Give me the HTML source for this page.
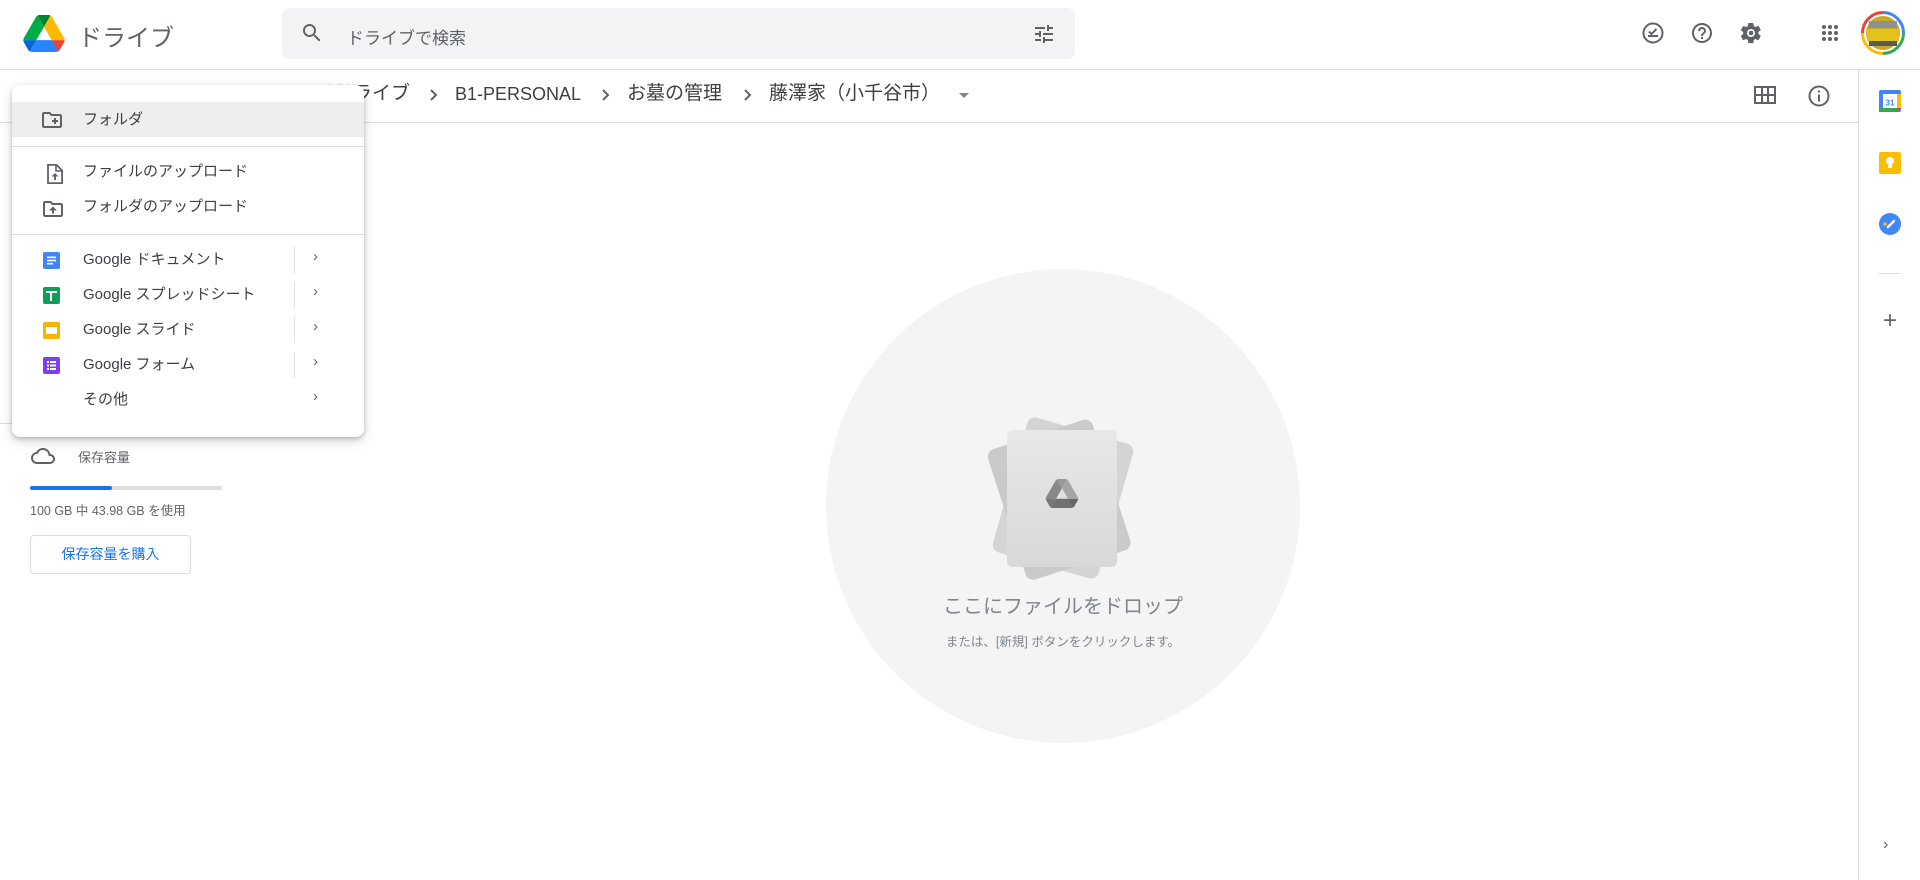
<!DOCTYPE html>
<html><head><meta charset="utf-8"><style>
*{box-sizing:border-box;margin:0;padding:0}
body{width:1920px;height:880px;background:#fff;font-family:"Liberation Sans","Noto Sans CJK JP",sans-serif;position:relative;overflow:hidden;color:#3c4043}
.a{position:absolute}
.mi{position:absolute;left:83px;font-size:15px;color:#3c4043;line-height:20px}
.ic{position:absolute}
.chev{position:absolute;left:301px;font-size:15px;color:#5f6368}
.vs{position:absolute;left:282px;width:1px;height:26px;background:#e0e0e0}
.bc{position:absolute;top:81px;font-size:19px;color:#3c4043;white-space:nowrap;line-height:26px}
</style></head><body>
<svg class="a" style="left:23px;top:15px" width="42" height="37" viewBox="0 0 87.3 78"><path d="m6.6 66.85 3.850 6.65c.8 1.4 1.95 2.5 3.3 3.3l13.75-23.8h-27.5c0 1.55.4 3.1 1.2 4.5z" fill="#0066da"/><path d="m43.65 25-13.75-23.8c-1.35.8-2.5 1.9-3.3 3.3l-25.4 44a9.06 9.06 0 0 0 -1.2 4.5h27.5z" fill="#00ac47"/><path d="m73.55 76.8c1.35-.8 2.5-1.9 3.3-3.3l1.6-2.75 7.65-13.25c.8-1.4 1.2-2.95 1.2-4.5h-27.502l5.852 11.5z" fill="#ea4335"/><path d="m43.65 25 13.75-23.8c-1.35-.8-2.9-1.2-4.5-1.2h-18.5c-1.6 0-3.15.45-4.5 1.2z" fill="#00832d"/><path d="m59.8 53h-32.3l-13.75 23.8c1.35.8 2.9 1.2 4.5 1.2h50.8c1.6 0 3.15-.45 4.5-1.2z" fill="#2684fc"/><path d="m73.4 26.5-12.7-22c-.8-1.4-1.95-2.5-3.3-3.3l-13.75 23.8 16.150 28h27.45c0-1.55-.4-3.1-1.2-4.5z" fill="#ffba00"/></svg>
<div class="a" style="left:78px;top:18px;font-size:24px;color:#5f6368">ドライブ</div>
<div class="a" style="left:282px;top:8px;width:793px;height:51px;background:#f1f3f4;border-radius:8px"></div>
<svg class="a" style="left:300px;top:21px" width="24" height="24" viewBox="0 0 24 24"><path fill="#5f6368" d="M15.5 14h-.79l-.28-.27A6.470 6.470 0 0 0 16 9.5 6.5 6.5 0 1 0 9.5 16c1.61 0 3.09-.59 4.23-1.57l.27.28v.79l5 4.99L20.49 19l-4.99-5zm-6 0C7.01 14 5 11.99 5 9.5S7.01 5 9.5 5 14 7.01 14 9.5 11.990 14 9.5 14z"/></svg>
<div class="a" style="left:347px;top:24px;font-size:17px;color:#5f6368">ドライブで検索</div>
<svg class="a" style="left:1032px;top:22px" width="24" height="24" viewBox="0 0 24 24"><path fill="#5f6368" d="M3 17v2h6v-2H3zM3 5v2h10V5H3zm10 16v-2h8v-2h-8v-2h-2v6h2zM7 9v2H3v2h4v2h2V9H7zm14 4v-2H11v2h10zm-6-4h2V7h4V5h-4V3h-2v6z"/></svg>
<svg class="a" style="left:1641px;top:21px" width="24" height="24" viewBox="0 0 24 24"><circle cx="12" cy="12" r="9.5" fill="none" stroke="#5f6368" stroke-width="2"/><path d="M7 15h10M8 10.5l2.5 2.5 5-5" fill="none" stroke="#5f6368" stroke-width="2"/></svg>
<svg class="a" style="left:1690px;top:21px" width="24" height="24" viewBox="0 0 24 24"><path fill="#5f6368" d="M11 18h2v-2h-2v2zm1-16C6.48 2 2 6.48 2 12s4.48 10 10 10 10-4.48 10-10S17.52 2 12 2zm0 18c-4.41 0-8-3.59-8-8s3.59-8 8-8 8 3.59 8 8-3.59 8-8 8zm0-14c-2.21 0-4 1.79-4 4h2c0-1.1.9-2 2-2s2 .9 2 2c0 2-3 1.75-3 5h2c0-2.25 3-2.5 3-5 0-2.21-1.79-4-4-4z"/></svg>
<svg class="a" style="left:1739px;top:21px" width="24" height="24" viewBox="0 0 24 24"><path fill="#5f6368" d="M19.4 13c.04-.32.06-.66.06-1s-.02-.68-.07-1l2.16-1.68c.19-.15.24-.42.12-.64l-2.05-3.54c-.12-.22-.39-.3-.61-.22l-2.55 1.02c-.53-.4-1.1-.74-1.72-.99L14.36 2.2A.5.5 0 0 0 13.86 2h-4.1c-.25 0-.46.18-.49.42l-.39 2.71c-.62.25-1.19.59-1.72.99L4.6 5.1c-.23-.09-.49 0-.61.22L1.94 8.86c-.13.22-.07.49.12.64L4.22 11c-.05.32-.08.66-.08 1s.02.68.07 1l-2.16 1.68c-.19.15-.24.42-.12.64l2.05 3.54c.12.22.39.3.61.22l2.550-1.02c.53.4 1.1.74 1.72.99l.39 2.71c.04.24.25.42.49.42h4.1c.25 0 .46-.18.49-.42l.39-2.71c.62-.25 1.19-.59 1.72-.99l2.55 1.02c.23.09.49 0 .61-.22l2.05-3.54c.12-.22.07-.49-.12-.64L19.4 13zM12 16c-2.2 0-4-1.8-4-4s1.8-4 4-4 4 1.8 4 4-1.8 4-4 4z"/><circle cx="12" cy="12" r="2.3" fill="#5f6368"/></svg>
<svg class="a" style="left:1818px;top:21px" width="24" height="24" viewBox="0 0 24 24" fill="#5f6368"><circle cx="6" cy="6" r="2"/><circle cx="12" cy="6" r="2"/><circle cx="18" cy="6" r="2"/><circle cx="6" cy="12" r="2"/><circle cx="12" cy="12" r="2"/><circle cx="18" cy="12" r="2"/><circle cx="6" cy="18" r="2"/><circle cx="12" cy="18" r="2"/><circle cx="18" cy="18" r="2"/></svg>
<svg class="a" style="left:1861px;top:11px" width="44" height="44" viewBox="0 0 44 44"><path d="M22 1.5A20.5 20.5 0 0 1 42.5 22" stroke="#4285f4" stroke-width="3" fill="none"/><path d="M42.5 22A20.5 20.5 0 0 1 22 42.5" stroke="#34a853" stroke-width="3" fill="none"/><path d="M22 42.5A20.5 20.5 0 0 1 1.5 22" stroke="#fbbc04" stroke-width="3" fill="none"/><path d="M1.5 22A20.5 20.5 0 0 1 22 1.5" stroke="#ea4335" stroke-width="3" fill="none"/><circle cx="22" cy="22" r="17" fill="#c9a826"/><rect x="6" y="18" width="32" height="12" fill="#e2c21b"/><rect x="8" y="10" width="28" height="7" fill="#8a9096"/><rect x="8" y="30" width="28" height="5" fill="#5a5a50"/></svg>
<div class="a" style="left:0;top:69px;width:1920px;height:1px;background:#dadce0"></div>
<div class="a" style="left:1858px;top:70px;width:1px;height:810px;background:#dadce0"></div>
<svg class="a" style="left:1879px;top:90px" width="22" height="22" viewBox="0 0 22 22"><rect x="0" y="0" width="22" height="22" rx="2" fill="#4285f4"/><rect x="4" y="4" width="14" height="14" fill="#fff"/><rect x="0" y="18" width="18" height="4" fill="#34a853"/><rect x="18" y="4" width="4" height="14" fill="#fbbc04"/><path d="M18 18h4l-4 4z" fill="#ea4335"/><text x="11" y="15.5" font-size="8" text-anchor="middle" fill="#4285f4" font-family="Liberation Sans" font-weight="bold">31</text></svg>
<svg class="a" style="left:1879px;top:152px" width="22" height="22" viewBox="0 0 22 22"><rect width="22" height="22" rx="2" fill="#fbbc04"/><circle cx="11" cy="9" r="4" fill="#fff"/><rect x="9" y="13" width="4" height="3" fill="#fff"/></svg>
<svg class="a" style="left:1879px;top:213px" width="22" height="22" viewBox="0 0 22 22"><circle cx="11" cy="11" r="11" fill="#4285f4"/><path d="M9 14l6-6" stroke="#fff" stroke-width="2.5" stroke-linecap="round"/><circle cx="6" cy="11" r="1.8" fill="#fbbc04"/></svg>
<div class="a" style="left:1879px;top:273px;width:22px;height:1px;background:#dadce0"></div>
<div class="a" style="left:1879px;top:307px;font-size:24px;color:#5f6368;width:22px;text-align:center">+</div>
<div class="a" style="left:1883px;top:836px;font-size:16px;color:#5f6368">›</div>
<div class="a" style="left:0;top:122px;width:1858px;height:1px;background:#dadce0"></div>
<div class="bc" style="left:296px">マイドライブ</div>
<svg class="a" style="left:428px;top:88px" width="12" height="14"><path d="M3 2l5 5-5 5" fill="none" stroke="#5f6368" stroke-width="2"/></svg>
<div class="bc" style="left:455px;font-size:18px">B1-PERSONAL</div>
<svg class="a" style="left:600px;top:88px" width="12" height="14"><path d="M3 2l5 5-5 5" fill="none" stroke="#5f6368" stroke-width="2"/></svg>
<div class="bc" style="left:627px">お墓の管理</div>
<svg class="a" style="left:742px;top:88px" width="12" height="14"><path d="M3 2l5 5-5 5" fill="none" stroke="#5f6368" stroke-width="2"/></svg>
<div class="bc" style="left:769px">藤澤家（小千谷市）</div>
<svg class="a" style="left:958px;top:92px" width="12" height="8"><path d="M1 1h10L6 6z" fill="#80868b"/></svg>
<svg class="a" style="left:1754px;top:86px" width="22" height="18" viewBox="0 0 22 18"><path d="M0 0h22v18H0z" fill="#5f6368"/><path d="M2 2h5v6H2zM9 2h4v6H9zM15 2h5v6h-5zM2 10h5v6H2zM9 10h4v6H9zM15 10h5v6h-5z" fill="#fff"/></svg>
<svg class="a" style="left:1807px;top:84px" width="24" height="24" viewBox="0 0 24 24"><circle cx="12" cy="12" r="9.5" fill="none" stroke="#5f6368" stroke-width="2"/><rect x="11" y="10.5" width="2" height="7" fill="#5f6368"/><rect x="11" y="6.5" width="2" height="2" fill="#5f6368"/></svg>
<div class="a" style="left:0;top:423px;width:364px;height:1px;background:#dadce0"></div>
<svg class="a" style="left:29px;top:444px" width="28" height="24" viewBox="0 0 24 24"><path fill="#5f6368" d="M19.35 10.04A7.49 7.49 0 0 0 12 4C9.11 4 6.6 5.64 5.35 8.04A5.994 5.994 0 0 0 0 14c0 3.31 2.69 6 6 6h13c2.76 0 5-2.24 5-5 0-2.64-2.050-4.78-4.65-4.96zM19 18H6c-2.21 0-4-1.79-4-4 0-2.05 1.53-3.76 3.56-3.970l1.07-.11.5-.95A5.469 5.469 0 0 1 12 6c2.62 0 4.88 1.86 5.39 4.43l.3 1.5 1.53.11A2.98 2.98 0 0 1 22 15c0 1.65-1.35 3-3 3z"/></svg>
<div class="a" style="left:78px;top:447px;font-size:13px;color:#5f6368">保存容量</div>
<div class="a" style="left:30px;top:486px;width:192px;height:4px;background:#e0e0e0;border-radius:2px"></div>
<div class="a" style="left:30px;top:486px;width:82px;height:4px;background:#1a73e8;border-radius:2px"></div>
<div class="a" style="left:30px;top:500px;font-size:12.5px;color:#5f6368">100 GB 中 43.98 GB を使用</div>
<div class="a" style="left:30px;top:535px;width:161px;height:39px;border:1px solid #dadce0;border-radius:4px;font-size:14px;color:#1a73e8;text-align:center;line-height:37px">保存容量を購入</div>
<div class="a" style="left:826px;top:269px;width:474px;height:474px;border-radius:50%;background:#f4f4f4"></div>
<div class="a" style="left:1008px;top:428px;width:110px;height:140px;border-radius:8px;background:#d4d4d4;transform:rotate(16deg)"></div>
<div class="a" style="left:1008px;top:430px;width:110px;height:137px;border-radius:8px;background:#cacaca;transform:rotate(-18deg) translate(-4px,0)"></div>
<div class="a" style="left:1007px;top:430px;width:110px;height:137px;border-radius:6px;background:linear-gradient(#e8e8e8,#d8d8d8)"></div>
<svg class="a" style="left:1045px;top:479px" width="34" height="29" viewBox="0 0 87.3 78"><path d="m6.6 66.85 3.85 6.65c.8 1.4 1.95 2.5 3.3 3.3l13.75-23.8h-27.5c0 1.55.4 3.1 1.2 4.5z" fill="#777"/><path d="m43.65 25-13.75-23.8c-1.35.8-2.5 1.9-3.3 3.3l-25.4 44a9.06 9.06 0 0 0 -1.2 4.5h27.5z" fill="#888"/><path d="m73.55 76.8c1.35-.8 2.5-1.9 3.3-3.3l1.6-2.75 7.65-13.25c.8-1.4 1.2-2.95 1.2-4.5h-27.502l5.852 11.5z" fill="#666"/><path d="m43.65 25 13.75-23.8c-1.35-.8-2.9-1.2-4.5-1.2h-18.5c-1.6 0-3.15.45-4.5 1.2z" fill="#999"/><path d="m59.8 53h-32.3l-13.75 23.8c1.35.8 2.9 1.2 4.5 1.2h50.8c1.6 0 3.15-.45 4.5-1.2z" fill="#707070"/><path d="m73.4 26.5-12.7-22c-.8-1.4-1.95-2.5-3.3-3.3l-13.75 23.8 16.15 28h27.45c0-1.55-.4-3.1-1.2-4.5z" fill="#a5a5a5"/></svg>
<div class="a" style="left:826px;top:590px;width:474px;text-align:center;font-size:20px;color:#80868b">ここにファイルをドロップ</div>
<div class="a" style="left:826px;top:631px;width:474px;text-align:center;font-size:12.5px;color:#80868b">または、[新規] ボタンをクリックします。</div>
<div class="a" style="left:12px;top:85px;width:352px;height:352px;background:#fff;border-radius:8px;box-shadow:0 2px 4px rgba(0,0,0,.2),0 4px 12px rgba(0,0,0,.15)">
<div class="a" style="left:0;top:17px;width:352px;height:35px;background:#eeeeee"></div>
<svg class="ic" style="left:28px;top:23px" width="24" height="24" viewBox="0 0 24 24"><path fill="#5f6368" d="M20 6h-8l-2-2H4c-1.1 0-2 .9-2 2v12c0 1.1.9 2 2 2h16c1.1 0 2-.9 2-2V8c0-1.1-.9-2-2-2zm0 12H4V6h5.17l2 2H20v10zm-8-4h2v2h2v-2h2v-2h-2v-2h-2v2h-2z"/></svg>
<div class="mi" style="top:25px;left:71px">フォルダ</div>
<div class="a" style="left:0;top:61px;width:352px;height:1px;background:#dadce0"></div>
<svg class="ic" style="left:31px;top:77px" width="24" height="24" viewBox="0 0 24 24"><path fill="none" stroke="#5f6368" stroke-width="1.8" d="M5 2.9h8.5l5.6 5.6V21.1H5z"/><path d="M13 3v6h6" fill="none" stroke="#5f6368" stroke-width="1.6"/><path d="M12 11l-3.5 3.5h2.5V18h2v-3.5h2.5z" fill="#5f6368"/></svg>
<div class="mi" style="top:77px;left:71px">ファイルのアップロード</div>
<svg class="ic" style="left:29px;top:112px" width="24" height="24" viewBox="0 0 24 24"><path fill="#5f6368" d="M20 6h-8l-2-2H4c-1.1 0-2 .9-2 2v12c0 1.1.9 2 2 2h16c1.1 0 2-.9 2-2V8c0-1.1-.9-2-2-2zm0 12H4V6h5.17l2 2H20v10zM12 9.5l-4 4h3v3h2v-3h3z"/></svg>
<div class="mi" style="top:112px;left:71px">フォルダのアップロード</div>
<div class="a" style="left:0;top:149px;width:352px;height:1px;background:#dadce0"></div>
<svg class="ic" style="left:31px;top:167px" width="17" height="17" viewBox="0 0 17 17"><rect width="17" height="17" rx="2" fill="#4285f4"/><rect x="4" y="4.5" width="9" height="1.6" fill="#fff"/><rect x="4" y="7.7" width="9" height="1.6" fill="#fff"/><rect x="4" y="10.9" width="6" height="1.6" fill="#fff"/></svg>
<div class="mi" style="top:165px;left:71px">Google ドキュメント</div><div class="vs" style="top:162px"></div><div class="chev" style="top:163px">›</div>
<svg class="ic" style="left:31px;top:202px" width="17" height="17" viewBox="0 0 17 17"><rect width="17" height="17" rx="2" fill="#0f9d58"/><rect x="3" y="4" width="11" height="2" fill="#fff"/><rect x="7" y="4" width="2" height="10" fill="#fff"/></svg>
<div class="mi" style="top:200px;left:71px">Google スプレッドシート</div><div class="vs" style="top:197px"></div><div class="chev" style="top:198px">›</div>
<svg class="ic" style="left:31px;top:237px" width="17" height="17" viewBox="0 0 17 17"><rect width="17" height="17" rx="2" fill="#f4b400"/><rect x="3" y="5" width="11" height="7" fill="#fff"/></svg>
<div class="mi" style="top:235px;left:71px">Google スライド</div><div class="vs" style="top:232px"></div><div class="chev" style="top:233px">›</div>
<svg class="ic" style="left:31px;top:272px" width="17" height="17" viewBox="0 0 17 17"><rect width="17" height="17" rx="2" fill="#7e3ff2"/><g fill="#fff"><rect x="4" y="4" width="2" height="2"/><rect x="7" y="4" width="6" height="2"/><rect x="4" y="7.5" width="2" height="2"/><rect x="7" y="7.5" width="6" height="2"/><rect x="4" y="11" width="2" height="2"/><rect x="7" y="11" width="6" height="2"/></g></svg>
<div class="mi" style="top:270px;left:71px">Google フォーム</div><div class="vs" style="top:267px"></div><div class="chev" style="top:268px">›</div>
<div class="mi" style="top:305px;left:71px">その他</div><div class="chev" style="top:303px">›</div>
</div>
</body></html>
